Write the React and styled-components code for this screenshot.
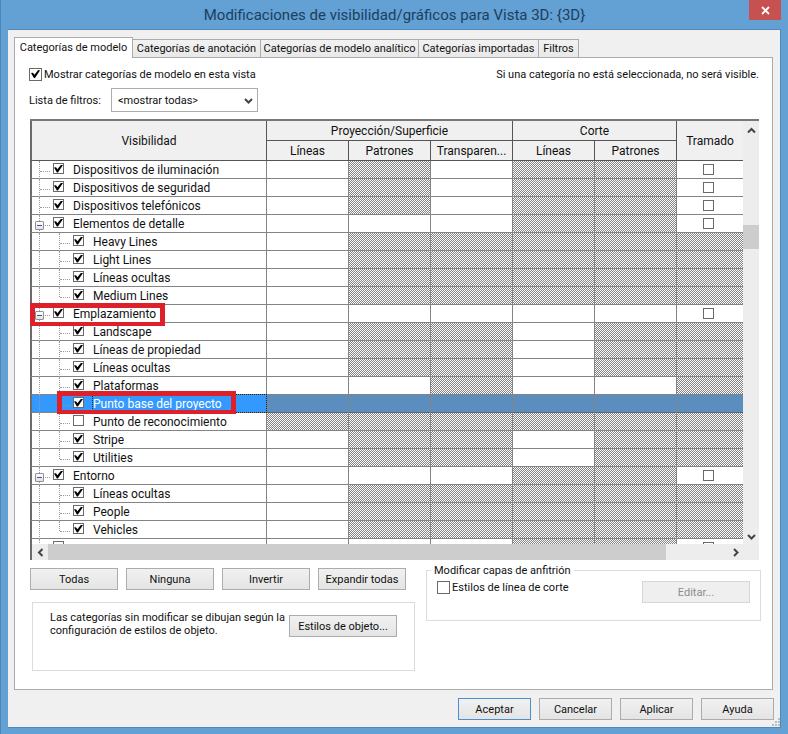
import React from "react";
import styled, { createGlobalStyle, css } from "styled-components";

const uiFont = 'Roboto, "Noto Sans", sans-serif';
const hatch =
  "repeating-conic-gradient(#848484 0 25%, #fcfcfc 0 50%) 0 0 / 2px 2px";

const GlobalStyle = createGlobalStyle`
  *, *::before, *::after { box-sizing: border-box; }
  html, body, #root { height: 100%; }
  body { margin: 0; font: 11px/13px ${uiFont}; color: #111; }
  button, input, select { font: inherit; color: inherit; margin: 0; }
`;

const Frame = styled.div`
  min-height: 100%;
  display: flex;
  flex-direction: column;
  padding: 0 7px 7px;
  background: #63a0d3;
  border-left: 1px solid #4d86b8;
`;

const TitleBar = styled.header`
  display: grid;
  grid-template-columns: 32px 1fr 32px;
  height: 29px;
  flex: none;
`;

const Title = styled.h1`
  margin: 0;
  text-align: center;
  font: 400 15px/30px ${uiFont};
  color: #1c3f60;
`;

const CloseButton = styled.button`
  height: 20px;
  border: 0;
  padding: 0;
  display: grid;
  place-items: center;
  background: #c75050;
`;

const Client = styled.main`
  flex: 1;
  display: flex;
  flex-direction: column;
  padding: 6px 7px 0 6px;
  background: #f0f0f0;
  border: 1px solid #5288b8;
  border-left: 0;
`;

const TabStrip = styled.div`
  display: flex;
  align-items: flex-end;
  height: 21px;
`;

const Tab = styled.button`
  height: 18px;
  padding: 0;
  text-align: center;
  white-space: nowrap;
  flex: 0 0 ${(p) => p.$width}px;
  background: linear-gradient(#f2f2f2, #e8e8e8);
  border: 1px solid #acacac;
  border-left-width: ${(p) => (p.$first ? 1 : 0)}px;
  border-bottom: 0;
  ${(p) =>
    p.$active &&
    css`
      height: 21px;
      margin-bottom: -1px;
      padding-bottom: 2px;
      background: #fff;
      z-index: 1;
    `}
`;

const Panel = styled.section`
  flex: 1;
  display: flex;
  flex-direction: column;
  padding: 8px 13px 18px 14px;
  background: #fff;
  border: 1px solid #acacac;
`;

const TopRow = styled.div`
  display: flex;
  justify-content: space-between;
  align-items: center;
  height: 16px;
`;

const Hint = styled.p`
  margin: 0;
`;

const CheckLabel = styled.label`
  display: flex;
  align-items: center;
  gap: 2px;
`;

const Check = styled.input.attrs({ type: "checkbox" })`
  appearance: none;
  flex: none;
  width: ${(p) => p.$size || 11}px;
  height: ${(p) => p.$size || 11}px;
  background: #fff;
  border: 1px solid #6a6a6a;
  display: grid;
  place-items: center;
  &:checked::after {
    content: "";
    width: 9px;
    height: 8px;
    background: #000;
    clip-path: polygon(0 38%, 22% 34%, 38% 58%, 80% 0, 100% 6%, 44% 100%, 32% 100%);
  }
`;

const FilterRow = styled.div`
  display: flex;
  align-items: center;
  height: 24px;
  margin: 6px 0 7px;
`;

const FilterLabel = styled.label`
  width: 82px;
`;

const SelectWrap = styled.div`
  display: grid;
  grid-template-columns: 1fr 13px;
  width: 147px;
  height: 24px;
  align-items: center;
  border: 1px solid #acacac;
  & > select {
    grid-area: 1 / 1 / 2 / 3;
    appearance: none;
    height: 22px;
    padding: 0 6px;
    border: 0;
    background: transparent;
  }
  & > svg {
    grid-area: 1 / 2;
    pointer-events: none;
  }
`;

const GridFrame = styled.div`
  display: grid;
  grid-template-columns: 1fr 16px;
  grid-template-rows: 423px 16px;
  margin: 0 0 8px 1px;
  border-top: 2px solid #777;
`;

const Viewport = styled.div`
  overflow: hidden;
`;

const Table = styled.table`
  width: 100%;
  table-layout: fixed;
  border-collapse: separate;
  border-spacing: 0;
  font: 12px/17px ${uiFont};
  tr > *:first-child[data-edge] {
    border-left: 2px solid #6b6b6b;
  }
`;

const Head = styled.th`
  height: 20px;
  padding: 1px 0 0;
  font-weight: 400;
  text-align: center;
  background: #f0f0f0;
  border-right: ${(p) => (p.$last ? 0 : 1)}px solid #555;
  border-bottom: 1px solid #555;
`;

const Row = styled.tr`
  height: 18px;
`;

const NameCell = styled.td`
  position: relative;
  padding: 0;
  border-right: 1px solid #848484;
  border-bottom: 1px solid #848484;
  ${(p) =>
    p.$selected &&
    css`
      color: #fff;
      background: #3399ff;
      label {
        outline: 1px dotted #123;
      }
    `}
`;

const NameLine = styled.div`
  display: flex;
  height: 17px;
`;

const NameText = styled.label`
  flex: 1;
  margin-left: 9px;
  line-height: 19px;
  white-space: nowrap;
`;

const TreeCheck = styled(Check)`
  margin: 2px 0 0 1px;
`;

const GridCell = styled.td`
  padding: 0 ${(p) => (p.$last ? 3 : 0)}px 0 0;
  vertical-align: top;
  background: ${(p) => (p.$selected ? "#5b8dbf" : p.$hatched ? hatch : "#fff")};
  border-right: ${(p) => (p.$last ? 0 : 1)}px solid #848484;
  border-bottom: 1px solid ${(p) => (p.$selected ? "#55677c" : "#848484")};
`;

const HalftoneCheck = styled(Check)`
  margin: 3px auto 0;
`;

const Rail = styled.span`
  position: relative;
  flex: none;
  width: 20px;
  height: 18px;
  &::before {
    content: "";
    position: absolute;
    left: 7px;
    top: 0;
    height: ${(p) => (p.$end ? 10 : 18)}px;
    border-left: ${(p) => (p.$line ? 1 : 0)}px dotted #999;
  }
  &::after {
    content: "";
    position: absolute;
    left: 8px;
    top: 10px;
    width: 10px;
    border-top: ${(p) => (p.$branch ? 1 : 0)}px dotted #999;
  }
`;

const Expander = styled.button`
  position: absolute;
  z-index: 1;
  left: 3px;
  top: 6px;
  width: 9px;
  height: 9px;
  padding: 0;
  border: 1px solid #919191;
  border-radius: 1px;
  background: linear-gradient(#3c5a9a, #3c5a9a) center / 5px 1px no-repeat,
    linear-gradient(#fff, #e0e0e0);
`;

const Marker = styled.span`
  position: absolute;
  z-index: 2;
  left: ${(p) => p.$left}px;
  top: ${(p) => p.$top}px;
  width: ${(p) => p.$width}px;
  height: 23px;
  border: 5px solid #dd2029;
  border-bottom-width: 4px;
  pointer-events: none;
`;

const ScrollY = styled.div`
  display: grid;
  grid-template-rows: 18px 1fr 16px;
  background: #ededed;
`;

const ScrollX = styled.div`
  grid-column: 1 / 3;
  display: grid;
  grid-template-columns: 16px 1fr 16px;
  margin-right: 16px;
  background: #ededed;
  border-left: 2px solid #6b6b6b;
  box-shadow: 16px 0 #ededed;
`;

const ScrollButton = styled.button`
  display: grid;
  place-items: center;
  padding: 0;
  border: 0;
  background: transparent;
`;

const ThumbY = styled.div`
  height: 24px;
  margin-top: 86px;
  background: #cdcdcd;
`;

const ThumbX = styled.div`
  width: 91%;
  background: #cdcdcd;
`;

const Lower = styled.div`
  display: grid;
  grid-template-columns: minmax(0, 385fr) minmax(0, 335fr);
  column-gap: 11px;
  align-items: start;
  padding-left: 1px;
  margin-right: -2px;
`;

const ButtonRow = styled.div`
  display: flex;
  gap: 8px;
`;

const Button = styled.button`
  flex: none;
  width: ${(p) => p.$width}px;
  height: 22px;
  padding: 0;
  white-space: nowrap;
  background: linear-gradient(#f1f1f1, #e4e4e4);
  border: 1px solid ${(p) => (p.$primary ? "#4a90cf" : "#acacac")};
  &:disabled {
    color: #8c8c8c;
    background: #efefef;
    border-color: #d6d6d6;
  }
`;

const StylesBox = styled.div`
  display: flex;
  justify-content: space-between;
  align-items: flex-start;
  height: 69px;
  margin: 12px 0 0 2px;
  padding: 12px 17px 0;
  border: 1px solid #dcdcdc;
`;

const StylesText = styled.p`
  margin: -4px 0 0;
  white-space: nowrap;
`;

const HostGroup = styled.fieldset`
  display: flex;
  justify-content: space-between;
  align-items: flex-start;
  min-width: 0;
  height: 57px;
  margin: -4px 0 0;
  padding: 4px 10px 0;
  border: 1px solid #dcdcdc;
  & > legend {
    margin-left: -6px;
    padding: 0 3px;
  }
`;

const Footer = styled.footer`
  position: relative;
  display: flex;
  justify-content: flex-end;
  gap: 8px;
  height: 37px;
  margin-right: -1px;
  padding-top: 8px;
`;

const Grip = styled.svg`
  position: absolute;
  right: -6px;
  bottom: 1px;
`;

const chevrons = {
  up: "M1 6.5 4.5 3 8 6.5",
  down: "M1 3 4.5 6.5 8 3",
  left: "M6.5 1 3 4.5 6.5 8",
  right: "M3 1 6.5 4.5 3 8",
};

function Chevron({ dir }) {
  return (
    <svg width="9" height="9" viewBox="0 0 9 9" aria-hidden="true">
      <path d={chevrons[dir]} fill="none" stroke="#444" strokeWidth="2" />
    </svg>
  );
}

/* Columns: three projection cells, two cut cells, halftone.
   w = editable, h = not available, c = tick box */
const rows = [
  { name: "Dispositivos de iluminación", cells: "whwhhc" },
  { name: "Dispositivos de seguridad", cells: "whwhhc" },
  { name: "Dispositivos telefónicos", cells: "whwhhc" },
  { name: "Elementos de detalle", cells: "wwwhhc", open: true },
  { name: "Heavy Lines", cells: "whhhhh", child: true },
  { name: "Light Lines", cells: "whhhhh", child: true },
  { name: "Líneas ocultas", cells: "whhhhh", child: true },
  { name: "Medium Lines", cells: "whhhhh", child: true, end: true },
  { name: "Emplazamiento", cells: "wwwwwc", open: true, marker: { left: -2, top: -2, width: 135 } },
  { name: "Landscape", cells: "whhwhh", child: true },
  { name: "Líneas de propiedad", cells: "whhwhh", child: true },
  { name: "Líneas ocultas", cells: "whhwhh", child: true },
  { name: "Plataformas", cells: "wwhwwh", child: true },
  {
    name: "Punto base del proyecto",
    cells: "hhhhhh",
    child: true,
    selected: true,
    marker: { left: 25, top: -4, width: 179 },
  },
  { name: "Punto de reconocimiento", cells: "hhhhhh", child: true, off: true },
  { name: "Stripe", cells: "whhwhh", child: true },
  { name: "Utilities", cells: "whhwhh", child: true, end: true },
  { name: "Entorno", cells: "wwwhhc", open: true },
  { name: "Líneas ocultas", cells: "whhhhh", child: true },
  { name: "People", cells: "whhhhh", child: true },
  { name: "Vehicles", cells: "whhhhh", child: true, end: true },
  { name: "", cells: "wwwhhc", off: true },
];

function CategoryRow({ row, index }) {
  const id = `category-${index}`;
  const { marker } = row;
  return (
    <Row>
      <NameCell data-edge $selected={row.selected}>
        <NameLine>
          <Rail $line $branch={!row.child}>
            {row.open && <Expander aria-label={`Contraer ${row.name}`} />}
          </Rail>
          {row.child && <Rail $line $branch $end={row.end} />}
          <TreeCheck id={id} defaultChecked={!row.off} />
          <NameText htmlFor={id}>{row.name}</NameText>
        </NameLine>
        {marker && <Marker $left={marker.left} $top={marker.top} $width={marker.width} />}
      </NameCell>
      {row.cells.split("").map((kind, i) => (
        <GridCell key={i} $hatched={kind === "h"} $selected={row.selected} $last={i === 5}>
          {kind === "c" && <HalftoneCheck aria-label={`Tramado ${row.name}`} />}
        </GridCell>
      ))}
    </Row>
  );
}

const tabs = [
  ["Categorías de modelo", 119],
  ["Categorías de anotación", 128],
  ["Categorías de modelo analítico", 158],
  ["Categorías importadas", 120],
  ["Filtros", 40],
];

export default function App() {
  return (
    <Frame>
      <GlobalStyle />
      <TitleBar>
        <span />
        <Title>Modificaciones de visibilidad/gráficos para Vista 3D: {"{3D}"}</Title>
        <CloseButton aria-label="Cerrar">
          <svg width="9" height="9" viewBox="0 0 9 9" aria-hidden="true">
            <path d="M1 1 8 8M8 1 1 8" stroke="#fff" strokeWidth="1.8" />
          </svg>
        </CloseButton>
      </TitleBar>
      <Client>
        <TabStrip role="tablist">
          {tabs.map(([label, width], i) => (
            <Tab key={label} role="tab" aria-selected={i === 0} $active={i === 0} $first={i === 0} $width={width}>
              {label}
            </Tab>
          ))}
        </TabStrip>
        <Panel>
          <TopRow>
            <CheckLabel>
              <Check $size={13} defaultChecked />
              Mostrar categorías de modelo en esta vista
            </CheckLabel>
            <Hint>Si una categoría no está seleccionada, no será visible.</Hint>
          </TopRow>
          <FilterRow>
            <FilterLabel htmlFor="filter">Lista de filtros:</FilterLabel>
            <SelectWrap>
              <select id="filter">
                <option>&lt;mostrar todas&gt;</option>
              </select>
              <Chevron dir="down" />
            </SelectWrap>
          </FilterRow>
          <GridFrame>
            <Viewport>
              <Table>
                <colgroup>
                  <col />
                  <col width="82" />
                  <col width="82" />
                  <col width="82" />
                  <col width="82" />
                  <col width="82" />
                  <col width="66" />
                </colgroup>
                <thead>
                  <tr>
                    <Head data-edge rowSpan={2}>Visibilidad</Head>
                    <Head colSpan={3}>Proyección/Superficie</Head>
                    <Head colSpan={2}>Corte</Head>
                    <Head rowSpan={2} $last>Tramado</Head>
                  </tr>
                  <tr>
                    <Head>Líneas</Head>
                    <Head>Patrones</Head>
                    <Head>Transparen...</Head>
                    <Head>Líneas</Head>
                    <Head>Patrones</Head>
                  </tr>
                </thead>
                <tbody>
                  {rows.map((row, i) => (
                    <CategoryRow key={i} row={row} index={i} />
                  ))}
                </tbody>
              </Table>
            </Viewport>
            <ScrollY>
              <ScrollButton aria-label="Subir"><Chevron dir="up" /></ScrollButton>
              <ThumbY />
              <ScrollButton aria-label="Bajar"><Chevron dir="down" /></ScrollButton>
            </ScrollY>
            <ScrollX>
              <ScrollButton aria-label="Izquierda"><Chevron dir="left" /></ScrollButton>
              <ThumbX />
              <ScrollButton aria-label="Derecha"><Chevron dir="right" /></ScrollButton>
            </ScrollX>
          </GridFrame>
          <Lower>
            <div>
              <ButtonRow>
                <Button $width={88}>Todas</Button>
                <Button $width={88}>Ninguna</Button>
                <Button $width={88}>Invertir</Button>
                <Button $width={88}>Expandir todas</Button>
              </ButtonRow>
              <StylesBox>
                <StylesText>
                  Las categorías sin modificar se dibujan según la
                  <br />
                  configuración de estilos de objeto.
                </StylesText>
                <Button $width={108}>Estilos de objeto...</Button>
              </StylesBox>
            </div>
            <HostGroup>
              <legend>Modificar capas de anfitrión</legend>
              <CheckLabel>
                <Check $size={13} />
                Estilos de línea de corte
              </CheckLabel>
              <Button $width={108} disabled>Editar...</Button>
            </HostGroup>
          </Lower>
        </Panel>
        <Footer>
          <Button $width={73} $primary>Aceptar</Button>
          <Button $width={73}>Cancelar</Button>
          <Button $width={73}>Aplicar</Button>
          <Button $width={73}>Ayuda</Button>
          <Grip width="8" height="8" viewBox="0 0 8 8" aria-hidden="true">
            <path d="M6 0h2v2H6zM3 3h2v2H3zM6 3h2v2H6zM0 6h2v2H0zM3 6h2v2H3zM6 6h2v2H6z" fill="#bdbdbd" />
          </Grip>
        </Footer>
      </Client>
    </Frame>
  );
}
